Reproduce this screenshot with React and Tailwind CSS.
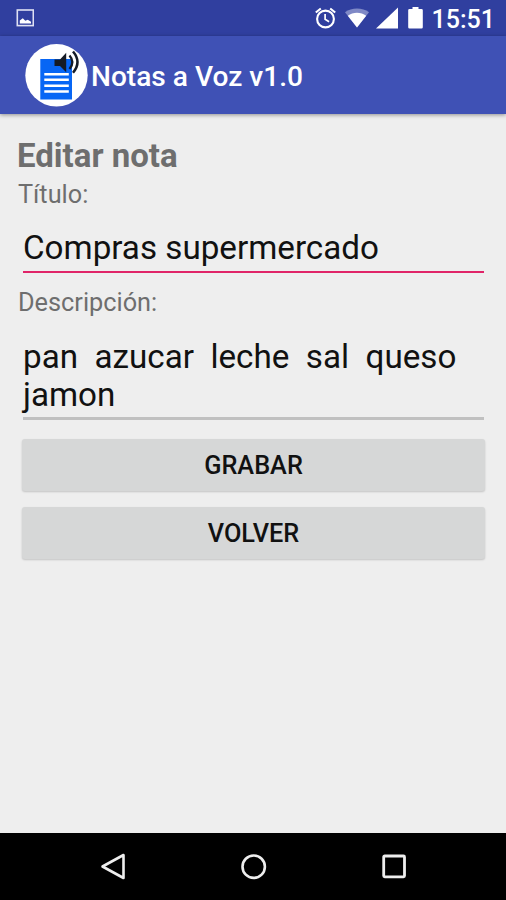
function StatusBar() {
  return (
    <div className="flex h-9 items-center bg-[#303f9f] pr-[11px] pl-4 text-white">
      <svg className="size-[18px]" viewBox="0 0 18 18" fill="none">
        <rect x="1.300" y="1" width="16" height="15.6" stroke="#dfe1f3" strokeWidth="1.6" />
        <path d="M3.800 14.500v-3l3-2.300 2.500 2.500 2.500-1 3.200 2v1.800z" fill="white" />
      </svg>
      <div className="ml-auto flex items-center">
        <svg className="size-[22px]" viewBox="0 0 22 22" fill="none" stroke="white">
          <circle cx="11.500" cy="12" r="8.400" strokeWidth="2.100" />
          <path d="M1.800 5.500L6.800 1.500M21.200 5.500L16.200 1.500" strokeWidth="2.100" />
          <path d="M11.100 7v5.300l4 2.500" strokeWidth="1.700" />
        </svg>
        <svg className="ml-[9px] h-[22px] w-[24px]" viewBox="0 0 24 22">
          <path d="M12 20.500L0 5.200C6.500.4 17.500.4 24 5.200z" fill="#7f89c6" />
          <path d="M12 20.500L2.800 8.800C8 4.600 16 4.600 21.200 8.800z" fill="white" />
        </svg>
        <svg className="ml-[7px] h-[22px] w-[22px]" viewBox="0 0 22 22">
          <path d="M0 21.500L22 0.500v21z" fill="white" />
        </svg>
        <svg className="ml-[10px] h-[22px] w-[15px]" viewBox="0 0 15 22">
          <path d="M4.500 0h6v2H13.500Q14.800 2 14.800 3.300V20.200Q14.800 21.500 13.500 21.500H1.500Q.2 21.500.2 20.200V3.300Q.2 2 1.500 2h3z" fill="white" />
        </svg>
        <span className="ml-[9px] pt-0.5 text-[25px] leading-none font-medium">15:51</span>
      </div>
    </div>
  )
}

function AppLogo() {
  return (
    <svg className="mb-[1px] size-[64px] shrink-0" viewBox="0 0 64 64" fill="none">
      <circle cx="32.500" cy="32.300" r="31.200" fill="white" />
      <rect x="16.300" y="16" width="31.700" height="40.500" fill="#0766f5" />
      <path d="M20.300 31.300h24.500M20.300 36.800h24.500M20.300 42.700h24.500M20.300 48.400h24.500" stroke="white" strokeWidth="2.500" />
      <path d="M30.500 16.500h5.500l6.200-6.700v19.500l-6.200-6.300h-5.500z" fill="#151b26" />
      <path d="M45.500 12.500q5.800 6.700 0 13.400" stroke="#151b26" strokeWidth="2.300" />
      <path d="M49 8.500q9 10.600 0 21.200" stroke="#151b26" strokeWidth="2.500" />
    </svg>
  )
}

function AppBar() {
  return (
    <header className="relative flex h-[78px] items-center bg-[#3f51b5] pl-6 shadow-[0_1px_4px_rgba(0,0,0,0.4)]">
      <AppLogo />
      <h1 className="ml-[3px] pt-1 text-[28.1px] leading-none font-medium text-white">Notas a Voz v1.0</h1>
    </header>
  )
}

function Button({ children }) {
  return (
    <button
      type="button"
      className="h-[52px] w-full rounded-[3px] bg-[#d6d7d7] pt-px text-[25.3px] leading-none font-medium text-[#111] shadow-[0_1px_2px_rgba(0,0,0,0.18)]"
    >
      {children}
    </button>
  )
}

function NavBar() {
  return (
    <nav className="flex h-[67px] items-center justify-between bg-black pr-[98px] pl-[100px]">
      <svg className="size-[28px]" viewBox="0 0 28 28" fill="none" stroke="#eee" strokeWidth="2.600">
        <path d="M2.500 13.500L23.500 2v23z" strokeLinejoin="round" />
      </svg>
      <svg className="size-[28px]" viewBox="0 0 28 28" fill="none" stroke="#eee" strokeWidth="2.600">
        <circle cx="13.700" cy="13.700" r="11.200" />
      </svg>
      <svg className="size-[28px]" viewBox="0 0 28 28" fill="none" stroke="#eee" strokeWidth="2.800">
        <rect x="3.700" y="3" width="20.800" height="20.800" rx="1" />
      </svg>
    </nav>
  )
}

export default function App() {
  return (
    <div className="flex h-[900px] w-[506px] flex-col overflow-hidden bg-[#eee] font-[Roboto,sans-serif]">
      <StatusBar />
      <AppBar />
      <main className="flex-1 pt-[23px] pr-[17px] pl-[18px] text-[#6e6e6e]">
        <h2 className="-ml-px text-[33px] leading-[38px] font-bold">Editar nota</h2>
        <p className="text-[25.3px] leading-[40px]">Título:</p>
        <div className="mx-[5px] mt-[9px] h-[49px] border-b-2 border-[#e02468] text-[33.2px] leading-[48px] text-[#111]">
          Compras supermercado
        </div>
        <p className="mt-[11px] text-[25.3px] leading-[38px]">Descripción:</p>
        <div className="mx-[5px] mt-[16px] h-[82px] border-b-[3px] border-[#c0c0c0] text-[33.2px] leading-[38px] whitespace-pre text-[#111]">
          {'pan  azucar  leche  sal  queso\njamon'}
        </div>
        <div className="mx-1 mt-[19px] flex flex-col gap-4">
          <Button>GRABAR</Button>
          <Button>VOLVER</Button>
        </div>
      </main>
      <NavBar />
    </div>
  )
}
